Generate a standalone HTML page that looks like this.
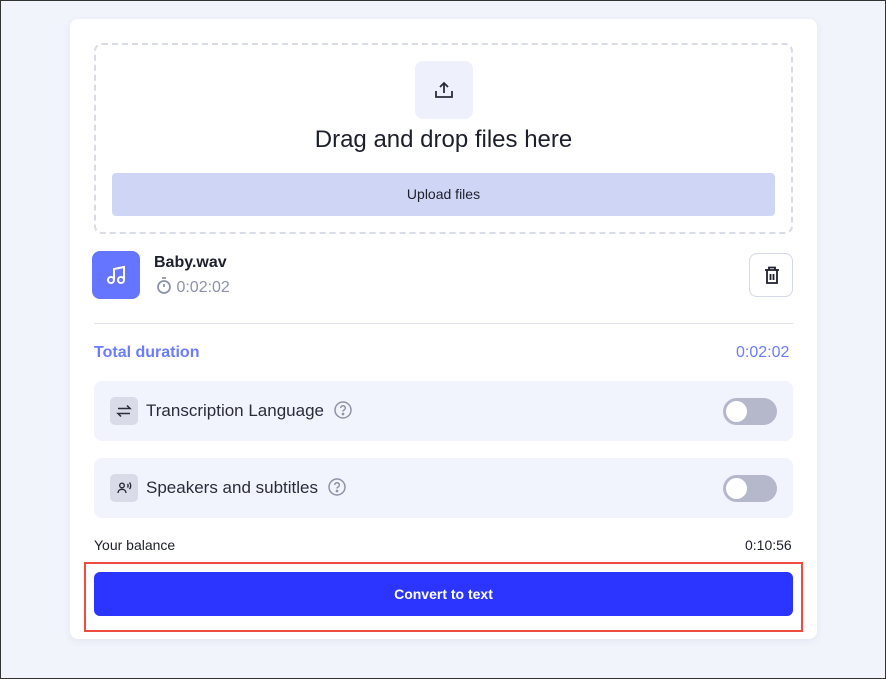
<!DOCTYPE html>
<html><head><style>
*{box-sizing:border-box;margin:0;padding:0}
body{width:886px;height:679px;background:#f2f4fc;font-family:"Liberation Sans",sans-serif;position:relative;overflow:hidden;color:#1d1f2b}
.a{position:absolute}
.card{left:70px;top:19px;width:747px;height:620px;background:#fff;border-radius:8px;box-shadow:0 2px 8px rgba(60,70,120,.08)}
.drop{left:94px;top:43px;width:699px;height:191px;border:2px dashed #d9dce6;border-radius:8px}
.row{left:94px;width:699px;height:60px;background:#f1f3fd;border-radius:8px}
.ib{left:16px;top:16px;width:28px;height:28px;background:#d9dce8;border-radius:5px}
.tg{left:629px;top:17px;width:54px;height:27px;background:#b5b8cb;border-radius:14px}
.tg:after{content:"";position:absolute;left:3px;top:3px;width:21px;height:21px;border-radius:50%;background:#fff}
.lbl{left:52px;top:20px;font-size:17px;color:#2a2c3a}
</style></head><body>
<div class="a" style="left:0;top:0;width:886px;height:679px;border:1px solid #333;z-index:5"></div>
<div class="a card"></div>
<div class="a drop"></div>
<div class="a" style="left:415px;top:61px;width:58px;height:58px;background:#eef0fb;border-radius:8px">
<svg class="a" style="left:18px;top:18px" width="22" height="22" viewBox="0 0 22 22" fill="none" stroke="#2a2c3a" stroke-width="1.8"><path d="M11 14V4M7 8l4-4 4 4M3 12v6h16v-6"/></svg></div>
<div class="a" style="left:94px;width:699px;top:126px;text-align:center;font-size:24px;color:#1d1f2b">Drag and drop files here</div>
<div class="a" style="left:112px;top:173px;width:663px;height:43px;background:#cfd6f5;border-radius:4px;text-align:center;line-height:43px;font-size:14px">Upload files</div>
<div class="a" style="left:92px;top:251px;width:48px;height:48px;background:#6675ff;border-radius:8px">
<svg class="a" style="left:13px;top:13px" width="22" height="22" viewBox="0 0 22 22" fill="none" stroke="#fff" stroke-width="2"><circle cx="6" cy="16" r="3"/><circle cx="16" cy="16" r="3"/><path d="M9 16V5l10-2v13"/></svg></div>
<div class="a" style="left:154px;top:254px;font-size:16px;font-weight:bold">Baby.wav</div>
<div class="a" style="left:156px;top:277px;font-size:16px;color:#8e93a8">
<svg style="vertical-align:-2px" width="16" height="17" viewBox="0 0 16 17" fill="none" stroke="#8e93a8" stroke-width="1.8"><circle cx="8" cy="10" r="6"/><path d="M6 1h4M8 10V7"/></svg> 0:02:02</div>
<div class="a" style="left:749px;top:253px;width:44px;height:44px;border:1px solid #d5d8e6;border-radius:8px">
<svg class="a" style="left:13px;top:12px" width="18" height="19" viewBox="0 0 18 19" fill="none" stroke="#1d1f2b" stroke-width="1.8"><path d="M2 4h14M6 4V1.5h6V4M4 4v13h10V4M7.5 8v6M10.5 8v6"/></svg></div>
<div class="a" style="left:94px;top:323px;width:699px;height:1px;background:#e2e3ea"></div>
<div class="a" style="left:94px;top:344px;font-size:16px;font-weight:bold;color:#6b7cff">Total duration</div>
<div class="a" style="left:736px;top:344px;font-size:16px;color:#6b7cff">0:02:02</div>
<div class="a row" style="top:381px"><div class="a ib"><svg class="a" style="left:6px;top:6px" width="16" height="16" viewBox="0 0 16 16" fill="none" stroke="#2a2c3a" stroke-width="1.5"><path d="M2 5.5h12l-3-3M14 10.5H2l3 3"/></svg></div><div class="a lbl">Transcription Language <svg style="vertical-align:-3px;margin-left:5px" width="18" height="18" viewBox="0 0 18 18" fill="none" stroke="#8e93a8" stroke-width="1.5"><circle cx="9" cy="9" r="8"/><path d="M6.7 7a2.3 2.3 0 1 1 3 2.2c-.5.2-.7.6-.7 1.3"/><circle cx="9" cy="13" r=".6" fill="#8e93a8"/></svg></div><div class="a tg"></div></div>
<div class="a row" style="top:458px"><div class="a ib"><svg class="a" style="left:6px;top:6px" width="16" height="16" viewBox="0 0 16 16" fill="none" stroke="#2a2c3a" stroke-width="1.4"><circle cx="6" cy="5.5" r="2.3"/><path d="M2 13c0-2.3 1.8-3.7 4-3.7s4 1.4 4 3.7M11.5 4c.8.9.8 2.6 0 3.5M13.5 2.5c1.6 1.8 1.6 4.7 0 6.5"/></svg></div><div class="a lbl">Speakers and subtitles <svg style="vertical-align:-3px;margin-left:5px" width="18" height="18" viewBox="0 0 18 18" fill="none" stroke="#8e93a8" stroke-width="1.5"><circle cx="9" cy="9" r="8"/><path d="M6.7 7a2.3 2.3 0 1 1 3 2.2c-.5.2-.7.6-.7 1.3"/><circle cx="9" cy="13" r=".6" fill="#8e93a8"/></svg></div><div class="a tg"></div></div>
<div class="a" style="left:94px;top:537px;font-size:14px">Your balance</div>
<div class="a" style="left:745px;top:537px;font-size:14px">0:10:56</div>
<div class="a" style="left:84px;top:562px;width:719px;height:70px;border:2px solid #f04b40"></div>
<div class="a" style="left:94px;top:572px;width:699px;height:44px;background:#2b35ff;border-radius:6px;color:#fff;text-align:center;line-height:44px;font-size:14px;font-weight:bold">Convert to text</div>
</body></html>
